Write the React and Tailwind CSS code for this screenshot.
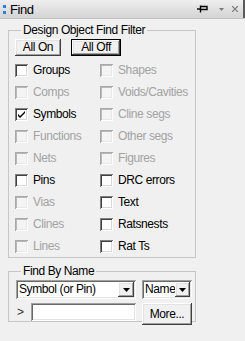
import React from 'react';

const raised =
  'bg-[#f0f0f0] shadow-[inset_-1px_-1px_#404040,inset_1px_1px_#ffffff,inset_-2px_-2px_#a0a0a0,inset_2px_2px_#e3e3e3]';
const sunken =
  'bg-white shadow-[inset_1px_1px_#a0a0a0,inset_-1px_-1px_#ffffff,inset_2px_2px_#696969,inset_-2px_-2px_#e3e3e3]';

const left = [
  { label: 'Groups', on: true },
  { label: 'Comps', on: false },
  { label: 'Symbols', on: true, checked: true },
  { label: 'Functions', on: false },
  { label: 'Nets', on: false },
  { label: 'Pins', on: true },
  { label: 'Vias', on: false },
  { label: 'Clines', on: false },
  { label: 'Lines', on: false },
];

const right = [
  { label: 'Shapes', on: false },
  { label: 'Voids/Cavities', on: false },
  { label: 'Cline segs', on: false },
  { label: 'Other segs', on: false },
  { label: 'Figures', on: false },
  { label: 'DRC errors', on: true },
  { label: 'Text', on: true },
  { label: 'Ratsnests', on: true },
  { label: 'Rat Ts', on: true },
];

function Check({ label, on, checked }) {
  return (
    <div className="flex h-[22px] items-center gap-[5px]">
      <span
        className={
          on
            ? 'flex h-[13px] w-[13px] items-center justify-center bg-white shadow-[inset_1px_1px_#808080,inset_-1px_-1px_#ffffff,inset_2px_2px_#404040,inset_-2px_-2px_#d8d8d8]'
            : 'flex h-[13px] w-[13px] items-center justify-center bg-[#f4f4f4] shadow-[inset_1px_1px_#a8a8a8,inset_-1px_-1px_#ffffff,inset_2px_2px_#b8b8b8,inset_-2px_-2px_#e8e8e8]'
        }
      >
        {checked && (
          <svg width="7" height="7" viewBox="0 0 7 7">
            <path d="M0 3 L2 5 L7 0 L7 2 L2 7 L0 5 Z" fill="#000" />
          </svg>
        )}
      </span>
      <span className={on ? 'text-black' : 'text-[#a3a3a3]'}>{label}</span>
    </div>
  );
}

function Arrow() {
  return (
    <svg width="7" height="4" viewBox="0 0 7 4">
      <path d="M0 0 H7 L3.5 4 Z" fill="#000" />
    </svg>
  );
}

export default function App() {
  return (
    <div
      className="flex h-[341px] w-[245px] flex-col overflow-hidden bg-[#f0f0f0] text-[12px] leading-[15px] tracking-[-0.4px] text-black"
      style={{ fontFamily: '"Liberation Sans Narrow", "Liberation Sans", Arial, sans-serif' }}
    >
      {/* title bar */}
      <div className="flex h-[19px] shrink-0 items-center border-b border-[#c4c4c4] bg-linear-to-b from-[#efefef] to-[#d3d3d3] pl-[3px]">
        <span className="flex h-[9px] w-[3px] flex-col justify-between">
          <span className="h-[3px] w-[3px] bg-[#2f7de0]" />
          <span className="h-[3px] w-[3px] bg-[#2f7de0]" />
        </span>
        <span className="ml-[4px] text-[13px]">Find</span>
        <div className="ml-auto flex h-full items-center">
          <svg width="11" height="8" viewBox="0 0 11 8" className="mr-[11px]">
            <path d="M0 4 H3" stroke="#000" strokeWidth="1.4" />
            <path d="M3.5 0.5 V7.5" stroke="#000" strokeWidth="1.4" />
            <path d="M4 1.5 H10 V4.5 H4" stroke="#000" strokeWidth="1.4" fill="none" />
          </svg>
          <svg width="5" height="3" viewBox="0 0 5 3" className="mr-[8px]">
            <path d="M0 0 H5 L2.5 3 Z" fill="#7a7a7a" />
          </svg>
          <svg width="6" height="6" viewBox="0 0 6 6" className="mr-[5px]">
            <path d="M0 0 L6 6 M6 0 L0 6" stroke="#7a7a7a" strokeWidth="1.2" />
          </svg>
          <span className="h-full w-[2px] bg-[#5a5a5a]" />
        </div>
      </div>

      {/* filter group */}
      <fieldset className="ml-[8px] mt-[4px] w-[188px] border border-[#c6c6c6] pl-[6px]">
        <legend className="ml-[6px] px-[2px]">Design Object Find Filter</legend>
        <div className="mt-px flex gap-[10px]">
          <button className={`h-[17px] w-[46px] ${raised}`}>All On</button>
          <button className="h-[17px] w-[50px] border border-black">
            <span className={`flex h-full w-full items-center justify-center ${raised}`}>All Off</span>
          </button>
        </div>
        <div className="mt-[3px] grid grid-cols-[85px_1fr]">
          <div className="flex flex-col">
            {left.map((c) => (
              <Check key={c.label} {...c} />
            ))}
          </div>
          <div className="flex flex-col">
            {right.map((c) => (
              <Check key={c.label} {...c} />
            ))}
          </div>
        </div>
      </fieldset>

      {/* find by name */}
      <fieldset className="ml-[8px] mt-[6px] w-[188px] border border-[#c6c6c6] pl-[7px]">
        <legend className="ml-[5px] px-[2px]">Find By Name</legend>
        <div className="mt-px flex gap-[6px]">
          <div className={`flex h-[19px] w-[120px] items-center p-[2px] ${sunken}`}>
            <span className="flex-1 pl-[1px]">Symbol (or Pin)</span>
            <span className={`flex h-[15px] w-[16px] items-center justify-center ${raised}`}>
              <Arrow />
            </span>
          </div>
          <div className={`flex h-[19px] w-[50px] items-center p-[2px] ${sunken}`}>
            <span className="flex-1 pl-[1px]">Name</span>
            <span className={`flex h-[15px] w-[15px] items-center justify-center ${raised}`}>
              <Arrow />
            </span>
          </div>
        </div>
        <div className="mt-[4px] flex items-start">
          <span className="flex h-[18px] w-[15px] items-center pl-[1px] text-[#333]">&gt;</span>
          <div className={`h-[18px] w-[105px] ${sunken}`} />
          <button className={`-mb-[4px] ml-[6px] h-[22px] w-[50px] ${raised}`}>More...</button>
        </div>
      </fieldset>
    </div>
  );
}
